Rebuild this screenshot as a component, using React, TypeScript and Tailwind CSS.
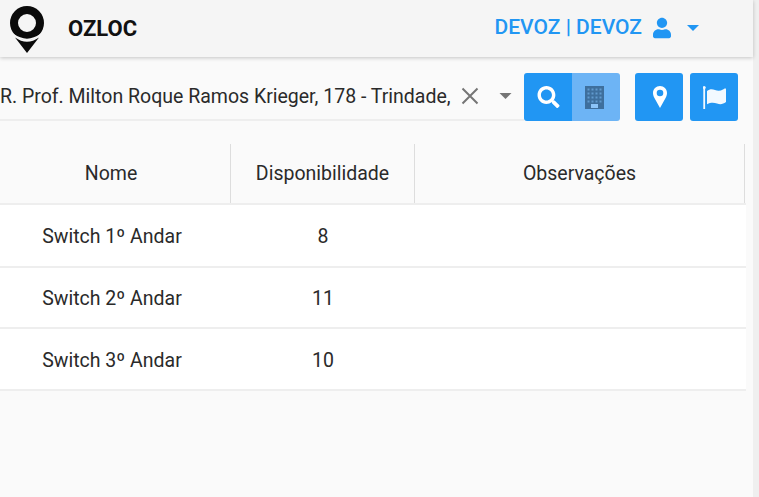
import React from "react";
import { FaUser, FaSearch } from "react-icons/fa";

const Caret = ({ className }: { className: string }) => (
  <svg viewBox="0 0 12 6" className={className} fill="currentColor"><path d="M0 0h12L6 6z" /></svg>
);

const Logo = () => (
  <svg viewBox="0 0 34 48" className="w-[34px] h-[48px] block">
    <path fillRule="evenodd" d="M17 1a17 17 0 1 1 0 34 17 17 0 0 1 0-34zm0 8a9 9 0 1 0 0 18 9 9 0 0 0 0-18z" fill="#0a0a0a" />
    <path d="M3 29.500Q17 39.500 31 29.500" stroke="#f5f5f5" strokeWidth="1.600" fill="none" />
    <path d="M5 32.500Q17 41 29 32.500L17 48z" fill="#0a0a0a" />
  </svg>
);

const Building = () => (
  <svg viewBox="0 0 19 23" className="w-[19px] h-[23px] block">
    <rect width="19" height="23" fill="#3e6f9d" />
    <g fill="#6aa6dc" opacity="0.8">
      {[2.5, 6.5, 10.5, 14.5].map((x) =>
        [2.5, 6.5, 10.5, 14.5].map((y) => <rect key={`${x}-${y}`} x={x} y={y} width="2" height="2" />)
      )}
    </g>
    <rect x="6" y="18" width="7" height="4" fill="#8cc4f8" />
  </svg>
);

const PinIcon = () => (
  <svg viewBox="0 0 14 22" className="w-[14px] h-[22px] block">
    <path fillRule="evenodd" fill="#fff" d="M7 0c3.900 0 7 3 7 6.900 0 1.700-.6 3.300-1.300 4.900L7 22 1.300 11.800C.6 10.200 0 8.600 0 6.900 0 3 3.100 0 7 0zm0 3.700a3.300 3.300 0 1 0 0 6.600 3.300 3.300 0 0 0 0-6.600z" />
  </svg>
);

const FlagIcon = () => (
  <svg viewBox="0 0 24 23" className="w-[24px] h-[23px] block" fill="#f2f9ff">
    <rect x="0.300" y="1" width="1.800" height="22" />
    <circle cx="1.200" cy="1.500" r="1.500" />
    <path d="M4 5c3-2.500 5.500-2 8-1 3 1.200 5.500 1 8-.6.800-.5 3-1.600 3-.4v13c-3 2.200-5.500 2.700-9 1.500-3-1-6-1.300-10 .7z" />
  </svg>
);

const rows: [string, string, string][] = [
  ["Switch 1º Andar", "8", "h-[63px]"],
  ["Switch 2º Andar", "11", "h-[61px]"],
  ["Switch 3º Andar", "10", "h-[62px]"],
];

export default function App() {
  return (
    <div className="w-[759px] h-[497px] overflow-hidden flex bg-[#fafafa] text-[#2a2a2a] font-['Roboto',sans-serif]">
      <div className="w-[753px] shrink-0 flex flex-col">
        <header className="h-[57px] shrink-0 bg-[#f5f5f5] shadow-[0_1px_4px_rgba(0,0,0,0.22)] flex items-center relative">
          <div className="ml-[10px] mt-[1px]"><Logo /></div>
          <span className="ml-[24px] text-[22px] font-bold text-[#111]">OZLOC</span>
          <div className="ml-auto mr-[54px] mt-[-2px] flex items-center text-[#2196f3] text-[21px] font-medium">
            <span>DEVOZ | DEVOZ</span>
            <FaUser className="ml-[11px] w-[18px] h-[22px]" />
            <Caret className="ml-[16px] w-[12px] h-[6px]" />
          </div>
        </header>

        <div className="h-[64px] shrink-0 pt-[16px] flex">
          <div className="w-[524px] h-[48px] border-b-2 border-[#eeeeee] flex items-center">
            <span className="w-[451px] shrink-0 pt-[1px] text-[19.5px] whitespace-nowrap overflow-hidden">R. Prof. Milton Roque Ramos Krieger, 178 - Trindade,</span>
            <svg viewBox="0 0 18 18" className="ml-[10px] w-[18px] h-[18px] shrink-0 text-[#757575]" stroke="currentColor" strokeWidth="2" fill="none"><path d="M1.500 1.500l15 15M16.500 1.500l-15 15" /></svg>
            <Caret className="ml-[20px] w-[13px] h-[6px] shrink-0 text-[#757575]" />
          </div>
          <div className="w-[96px] h-[48px] rounded-[3px] overflow-hidden flex">
            <div className="w-[48px] bg-[#2196f3] flex items-center justify-center text-white"><FaSearch className="w-[23px] h-[22px]" /></div>
            <div className="w-[48px] bg-[#6db4f5] flex items-center justify-center pr-[3px]"><Building /></div>
          </div>
          <div className="ml-[15px] w-[48px] h-[48px] rounded-[3px] bg-[#2196f3] flex items-center justify-center pl-[1px]"><PinIcon /></div>
          <div className="ml-[7px] w-[48px] h-[48px] rounded-[3px] bg-[#2196f3] flex items-center justify-center pl-[1px]"><FlagIcon /></div>
        </div>

        <div className="mt-[23px] w-[746px] text-[19.5px]">
          <div className="flex h-[61px] border-b-2 border-[#eeeeee] bg-[#fafafa]">
            <div className="w-[231px] pr-[8px] border-r border-[#dddddd] flex items-center justify-center">Nome</div>
            <div className="w-[184px] border-r border-[#dddddd] flex items-center justify-center">Disponibilidade</div>
            <div className="w-[330px] border-r border-[#dddddd] flex items-center justify-center">Observações</div>
          </div>
          {rows.map(([n, d, h]) => (
            <div key={n} className={`flex ${h} bg-white border-b-2 border-[#eeeeee] items-center pt-[3px]`}>
              <div className="w-[231px] pr-[7px] text-center">{n}</div>
              <div className="w-[184px] text-center">{d}</div>
              <div className="w-[331px]" />
            </div>
          ))}
        </div>
      </div>
      <div className="flex-1 bg-[#efefef]" />
    </div>
  );
}
